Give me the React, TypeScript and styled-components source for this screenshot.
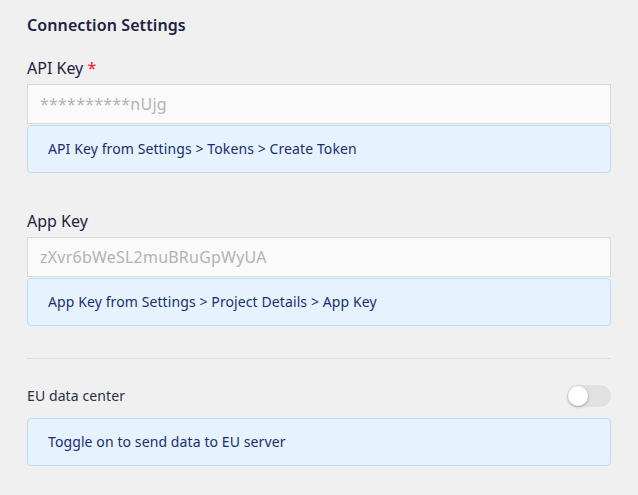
import React, { ReactElement } from 'react'
import styled, { createGlobalStyle } from 'styled-components'

const GlobalStyle = createGlobalStyle`
  body {
    margin: 0;
    background: #f0f0f0;
    font-family: 'Noto Sans', 'Open Sans', sans-serif;
  }
`

const App = (): ReactElement => {
  return (
    <>
      <GlobalStyle />
      <Page>
        <Title>Connection Settings</Title>
        <Field>
          <Label>
            API Key <Required>*</Required>
          </Label>
          <Input placeholder="**********nUjg" readOnly />
          <Help>API Key from Settings &gt; Tokens &gt; Create Token</Help>
        </Field>
        <Field $spaced>
          <Label>App Key</Label>
          <Input placeholder="zXvr6bWeSL2muBRuGpWyUA" readOnly />
          <Help>App Key from Settings &gt; Project Details &gt; App Key</Help>
        </Field>
        <Divider />
        <ToggleRow>
          <SmallLabel>EU data center</SmallLabel>
          <Switch>
            <Knob />
          </Switch>
        </ToggleRow>
        <Help>Toggle on to send data to EU server</Help>
      </Page>
    </>
  )
}

const Page = styled.div`
  padding: 13px 27px 30px;
  display: flex;
  flex-direction: column;
`

const Title = styled.div`
  font-size: 16px;
  font-weight: 600;
  line-height: 24px;
  letter-spacing: 0.1px;
  color: #1c2240;
`

const Field = styled.div<{ $spaced?: boolean }>`
  margin-top: ${(p) => (p.$spaced ? '36px' : '19px')};
  display: flex;
  flex-direction: column;
`

const Label = styled.div`
  font-size: 16px;
  line-height: 24px;
  color: #1c2240;
  margin-bottom: 4px;
`

const Required = styled.span`
  color: #f0131e;
`

const Input = styled.input`
  box-sizing: border-box;
  height: 40px;
  width: 100%;
  padding: 0 12px;
  border: 1px solid #d9d9d9;
  border-radius: 0;
  background: #fafafa;
  font-family: inherit;
  font-size: 16px;
  letter-spacing: 0.22px;
  outline: none;
  &::placeholder {
    color: #b3b3b3;
  }
`

const Help = styled.div`
  box-sizing: border-box;
  margin-top: 1px;
  padding: 13px 20px;
  min-height: 48px;
  border: 1px solid #bcdcf8;
  border-radius: 4px;
  background: #e6f3fe;
  color: #172f6e;
  font-size: 14px;
  line-height: 20px;
  letter-spacing: 0.1px;
`

const Divider = styled.hr`
  margin: 32px 0 0;
  border: none;
  border-top: 1px solid #dcdcdc;
`

const ToggleRow = styled.div`
  margin-top: 26px;
  margin-bottom: 10px;
  display: flex;
  align-items: center;
  justify-content: space-between;
`

const SmallLabel = styled.div`
  font-size: 14px;
  line-height: 22px;
  letter-spacing: 0.1px;
  color: #2a2f45;
`

const Switch = styled.div`
  position: relative;
  width: 44px;
  height: 22px;
  border-radius: 11px;
  background: #e1e1e1;
`

const Knob = styled.div`
  position: absolute;
  left: 1px;
  top: 1px;
  width: 20px;
  height: 20px;
  border-radius: 50%;
  background: #fff;
  box-shadow: 0 1px 3px rgba(0, 0, 0, 0.3);
`

export default App
